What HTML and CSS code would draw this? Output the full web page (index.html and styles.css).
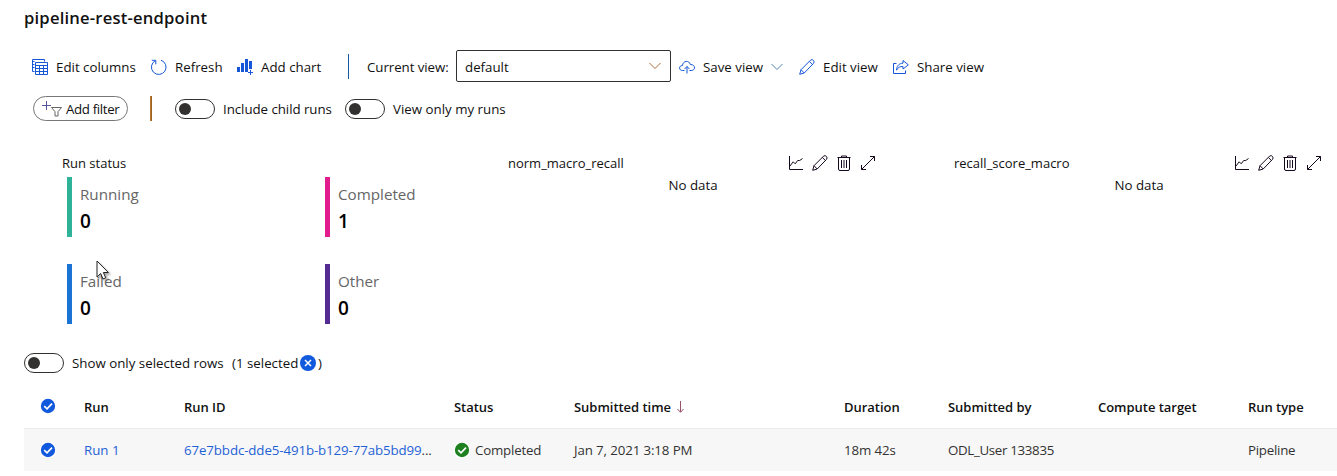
FILE: index.html
```html
<!DOCTYPE html>
<html lang="en">
<head>
<meta charset="utf-8">
<title>pipeline-rest-endpoint</title>
<link rel="stylesheet" href="styles.css">
</head>
<body>
<svg class="defs" aria-hidden="true">
  <symbol id="pencil" viewBox="0 0 16 16"><path d="M.7 15.3 2 10.7 11.6 1.1q1.7-1.2 2.9.4 1.2 1.300 0 2.900L5.200 14ZM2 10.700 5.200 14M10.300 2.400l3.300 3.300"/></symbol>
  <symbol id="line-chart" viewBox="0 0 16 16"><path d="M1.500 1v13.500H15M2 11l3.200-4.200 2 2 2.500-3.300h2L14.500 3.500"/></symbol>
  <symbol id="trash" viewBox="0 0 16 16"><path d="M1.500 2.500h13M5.500 2.500v-1.500h5v1.500M2.500 2.500V14q0 1.500 1.500 1.500h8q1.500 0 1.500-1.500V2.500M5.500 5v8M8 5v8M10.500 5v8"/></symbol>
  <symbol id="expand" viewBox="0 0 16 16"><path d="M1.500 14.500l13-13M10 1.500h4.500V6M1.500 10v4.500H6"/></symbol>
  <symbol id="check" viewBox="0 0 16 16"><circle cx="8" cy="8" r="8"/><path d="M4.200 8.200 7 10.800l5-5.200"/></symbol>
  <symbol id="chevron" viewBox="0 0 12 8"><path d="M.5 1 6 6.500 11.500 1"/></symbol>
</svg>
<main class="page">
  <h1 class="title">pipeline-rest-endpoint</h1>

  <div class="toolbar">
    <button class="tool columns"><svg class="icon" viewBox="0 0 16 16"><path d="M2.500 12.500H.5V.5h12v2M.5 2.500h2M.5 5.500h2M.5 8.500h2M3.500 3.500h12v12h-12ZM3.500 6.500h12M3.500 9.500h12M3.500 12.500h12M7.500 6.500v9M11.500 6.500v9"/></svg><span>Edit columns</span></button>
    <button class="tool refresh"><svg class="icon" viewBox="0 0 16 16"><path d="M10 1.200A7.300 7.300 0 1 1 4.300 1.700M.8 1.300h4v4"/></svg><span>Refresh</span></button>
    <button class="tool chart"><svg class="icon" viewBox="0 0 16 16"><path class="solid" d="M0 8h3v5H0zM4 4h3v9H4zM8 0h3v13H8zM12 2h3v8h-3z"/><path d="M13.500 11v5M11 13.500h5"/></svg><span>Add chart</span></button>
    <i class="rule"></i>
    <span class="view-label">Current view:</span>
    <button class="select"><span>default</span><svg class="chevron"><use href="#chevron"/></svg></button>
    <button class="tool save"><svg class="icon" viewBox="0 0 16 16"><path d="M5.500 11.500h-2C-.4 11.500-.4 6.500 3.500 6.500 3.700 1.500 10.500 1 11.300 5.500c5.500-.2 5.500 6 .8 6h-1.600M8 14.500V7.500M5.500 10 8 7.500l2.500 2.500"/></svg><span>Save view</span><svg class="chevron"><use href="#chevron"/></svg></button>
    <button class="tool edit"><svg class="icon"><use href="#pencil"/></svg><span>Edit view</span></button>
    <button class="tool share"><svg class="icon" viewBox="0 0 16 16"><path d="M3.500 4.500h-3v10h12v-3M10 1.500l5.300 4.300L10 10V7.500C7 7.200 5 8.500 3.500 11.200 3.600 7.200 6 4.300 10 4.200Z"/></svg><span>Share view</span></button>
  </div>

  <div class="filters">
    <button class="pill"><svg class="filter-icon" viewBox="0 0 20 16"><path class="plus" d="M4.500 0v9M0 4.500h9"/><path d="M9.500 6.500h10L16 10.700V15h-3v-4.300Z"/></svg><span>Add filter</span></button>
    <i class="rule warm"></i>
    <span class="toggle"></span><span class="child-label">Include child runs</span>
    <span class="toggle"></span><span class="mine-label">View only my runs</span>
  </div>

  <section class="cards">
    <article class="status-card">
      <h2>Run status</h2>
      <div class="stats">
        <div class="stat running"><span>Running</span><b>0</b></div>
        <div class="stat completed"><span>Completed</span><b>1</b></div>
        <div class="stat failed"><span>Failed</span><b>0</b>
          <svg class="cursor" viewBox="0 0 14 21"><path d="M1 1v16l3.700-3.500L7 19l2.700-1.200L7.400 12.500h5Z"/></svg></div>
        <div class="stat other"><span>Other</span><b>0</b></div>
      </div>
    </article>
    <article class="metric">
      <header><h2>norm_macro_recall</h2><svg><use href="#line-chart"/></svg><svg><use href="#pencil"/></svg><svg><use href="#trash"/></svg><svg><use href="#expand"/></svg></header>
      <p>No data</p>
    </article>
    <article class="metric">
      <header><h2>recall_score_macro</h2><svg><use href="#line-chart"/></svg><svg><use href="#pencil"/></svg><svg><use href="#trash"/></svg><svg><use href="#expand"/></svg></header>
      <p>No data</p>
    </article>
  </section>

  <div class="selection">
    <span class="toggle"></span><span class="only-label">Show only selected rows</span>
    <span class="count">(1 selected</span><svg class="clear" viewBox="0 0 16 16"><circle cx="8" cy="8" r="8"/><path d="M5 5l6 6M11 5l-6 6"/></svg><span>)</span>
  </div>

  <section class="table">
    <div class="row head">
      <svg class="check"><use href="#check"/></svg>
      <span>Run</span><span>Run ID</span><span>Status</span>
      <span class="sorted"><span>Submitted time</span><svg class="sort" viewBox="0 0 7 12"><path d="M3.500 0v11M.5 8l3 3.300L6.500 8"/></svg></span>
      <span>Duration</span><span>Submitted by</span><span>Compute target</span><span>Run type</span>
    </div>
    <div class="row body">
      <svg class="check"><use href="#check"/></svg>
      <a>Run 1</a><span class="run-id"><a>67e7bbdc-dde5-491b-b129-77ab5bd99</a>...</span>
      <span class="state"><svg class="check ok"><use href="#check"/></svg><span>Completed</span></span>
      <span class="tight">Jan 7, 2021 3:18 PM</span><span class="tight">18m 42s</span><span class="user">ODL_User 133835</span><span></span><span class="type">Pipeline</span>
    </div>
  </section>
</main>
</body>
</html>
```
FILE: styles.css
```css
* { box-sizing: border-box; }
body { margin: 0; background: #fff; color: #111; font: 13.3px/20px "Open Sans", "Noto Sans", sans-serif; overflow: hidden; }
.defs { position: absolute; width: 0; height: 0; }
.page { width: 1337px; height: 476px; display: flex; flex-direction: column; padding-left: 24px; white-space: nowrap; }
h1, h2, p { margin: 0; font-weight: 400; }
button { font: inherit; color: inherit; background: none; border: 0; padding: 0; text-align: left; }
svg { flex: none; fill: none; stroke: currentColor; stroke-width: 1; overflow: visible; }
.solid { fill: currentColor; stroke: none; }

.title { height: 50px; padding-top: 8px; font-size: 16.6px; letter-spacing: .2px; font-weight: 600; line-height: 20px; color: #111; }
.toolbar { height: 32px; display: flex; align-items: center; padding-left: 8px; }
.toolbar > * { flex: none; }
.tool { display: flex; align-items: center; gap: 8px; height: 22px; }
.tool span, .view-label { padding-top: 2px; }
.tool .icon { width: 16px; height: 16px; margin-top: 1px; color: #1557d6; }
.columns { width: 119px; }
.refresh { width: 86px; }
.chart { width: 111px; }
.rule { width: 1px; height: 25px; background: #155a9e; }
.view-label { width: 89px; margin-left: 18px; letter-spacing: -.06px; }
.select { width: 215px; height: 32px; display: flex; align-items: center; justify-content: space-between; padding: 2px 9px 0 8px; border: 1px solid #323130; border-radius: 2px; }
.chevron { width: 12px; height: 8px; color: #b26b3a; margin-top: -2px; }
.save { width: 120px; margin-left: 8px; }
.save .chevron { color: #4f83b3; margin-top: 1px; }
.edit { width: 94px; }

.filters { height: 25px; margin-top: 14px; display: flex; align-items: center; padding-left: 9px; }
.filters > * { flex: none; }
.pill { width: 95px; height: 25px; border: 1px solid #777; border-radius: 13px; display: flex; align-items: center; gap: 4px; padding-left: 8px; letter-spacing: -.36px; }
.filter-icon { width: 20px; height: 16px; color: #666; }
.plus { stroke: #555599; }
.rule.warm { width: 2px; margin: 0 23px 0 22px; background: linear-gradient(90deg, #c98a3d, #8c5515); }
.toggle { width: 40px; height: 20px; border: 1px solid #323130; border-radius: 10px; padding: 3px; margin-right: 8px; flex: none; }
.toggle::before { content: ""; display: block; width: 12px; height: 12px; border-radius: 50%; background: #323130; }
.child-label { width: 122px; letter-spacing: -.05px; }

.cards { height: 203px; margin-top: 32px; display: flex; }
.status-card { width: 446px; padding-left: 38px; flex: none; }
.cards h2 { height: 20px; font-size: 13px; line-height: 20px; }
.stats { display: grid; grid-template-columns: 258px 1fr; row-gap: 27px; padding: 4px 0 0 5px; }
.stat { height: 60px; position: relative; border-left: 5px solid; padding: 6px 0 0 8px; display: flex; flex-direction: column; }
.stat > span { font-size: 15.2px; line-height: 22px; color: #666; }
.stat b { font-size: 19px; line-height: 28px; font-weight: 600; color: #000; padding-top: 2px; }
.running { border-color: #2fb398; }
.completed { border-color: #e31c8d; }
.failed { border-color: #1b74d4; }
.other { border-color: #542b92; }
.cursor { position: absolute; left: 24px; top: -4px; width: 14px; height: 21px; fill: #fff; stroke: #222; filter: drop-shadow(2px 2px 1px #0005); }
.metric { width: 446px; padding-left: 38px; flex: none; }
.metric header { display: flex; align-items: center; gap: 8px; }
.metric h2 { width: 272px; }
.metric svg { width: 16px; height: 16px; color: #16091d; }
.metric p { width: 370px; text-align: center; margin-top: 2px; }

.selection { height: 20px; display: flex; align-items: center; margin-top: -3px; }
.only-label { width: 160px; }
.count { width: 68px; }
.clear { width: 16px; height: 16px; margin-right: 2px; fill: #1159dd; stroke: none; }
.clear path { stroke: #fff; stroke-width: 1.500; }

.table { margin-top: 13px; }
.row { display: grid; grid-template-columns: 60px 100px 270px 120px 270px 104px 150px 150px 1fr; align-items: center; }
.head { height: 43px; border-bottom: 1px solid #edebe9; font-weight: 600; font-size: 13px; letter-spacing: -.03px; color: #111; }
.body { height: 42px; background: #f7f7f7; color: #333; }
.row > .check { margin-left: 16px; }
.head > .check { margin-top: -2px; }
.check { width: 16px; height: 16px; fill: #1159dd; stroke: #fff; stroke-width: 1.700; }
.check.ok { fill: #1e801e; }
.row a { color: #1f62d6; }
.run-id { letter-spacing: -.11px; }
.tight { letter-spacing: -.12px; }
.user { letter-spacing: -.32px; }
.type { letter-spacing: -.25px; }
.sorted { display: flex; align-items: center; gap: 6px; }
.sort { width: 7px; height: 12px; color: #99516b; }
.state { display: flex; align-items: center; gap: 5px; letter-spacing: -.2px; }
.state .check { margin-left: 0; }
```
